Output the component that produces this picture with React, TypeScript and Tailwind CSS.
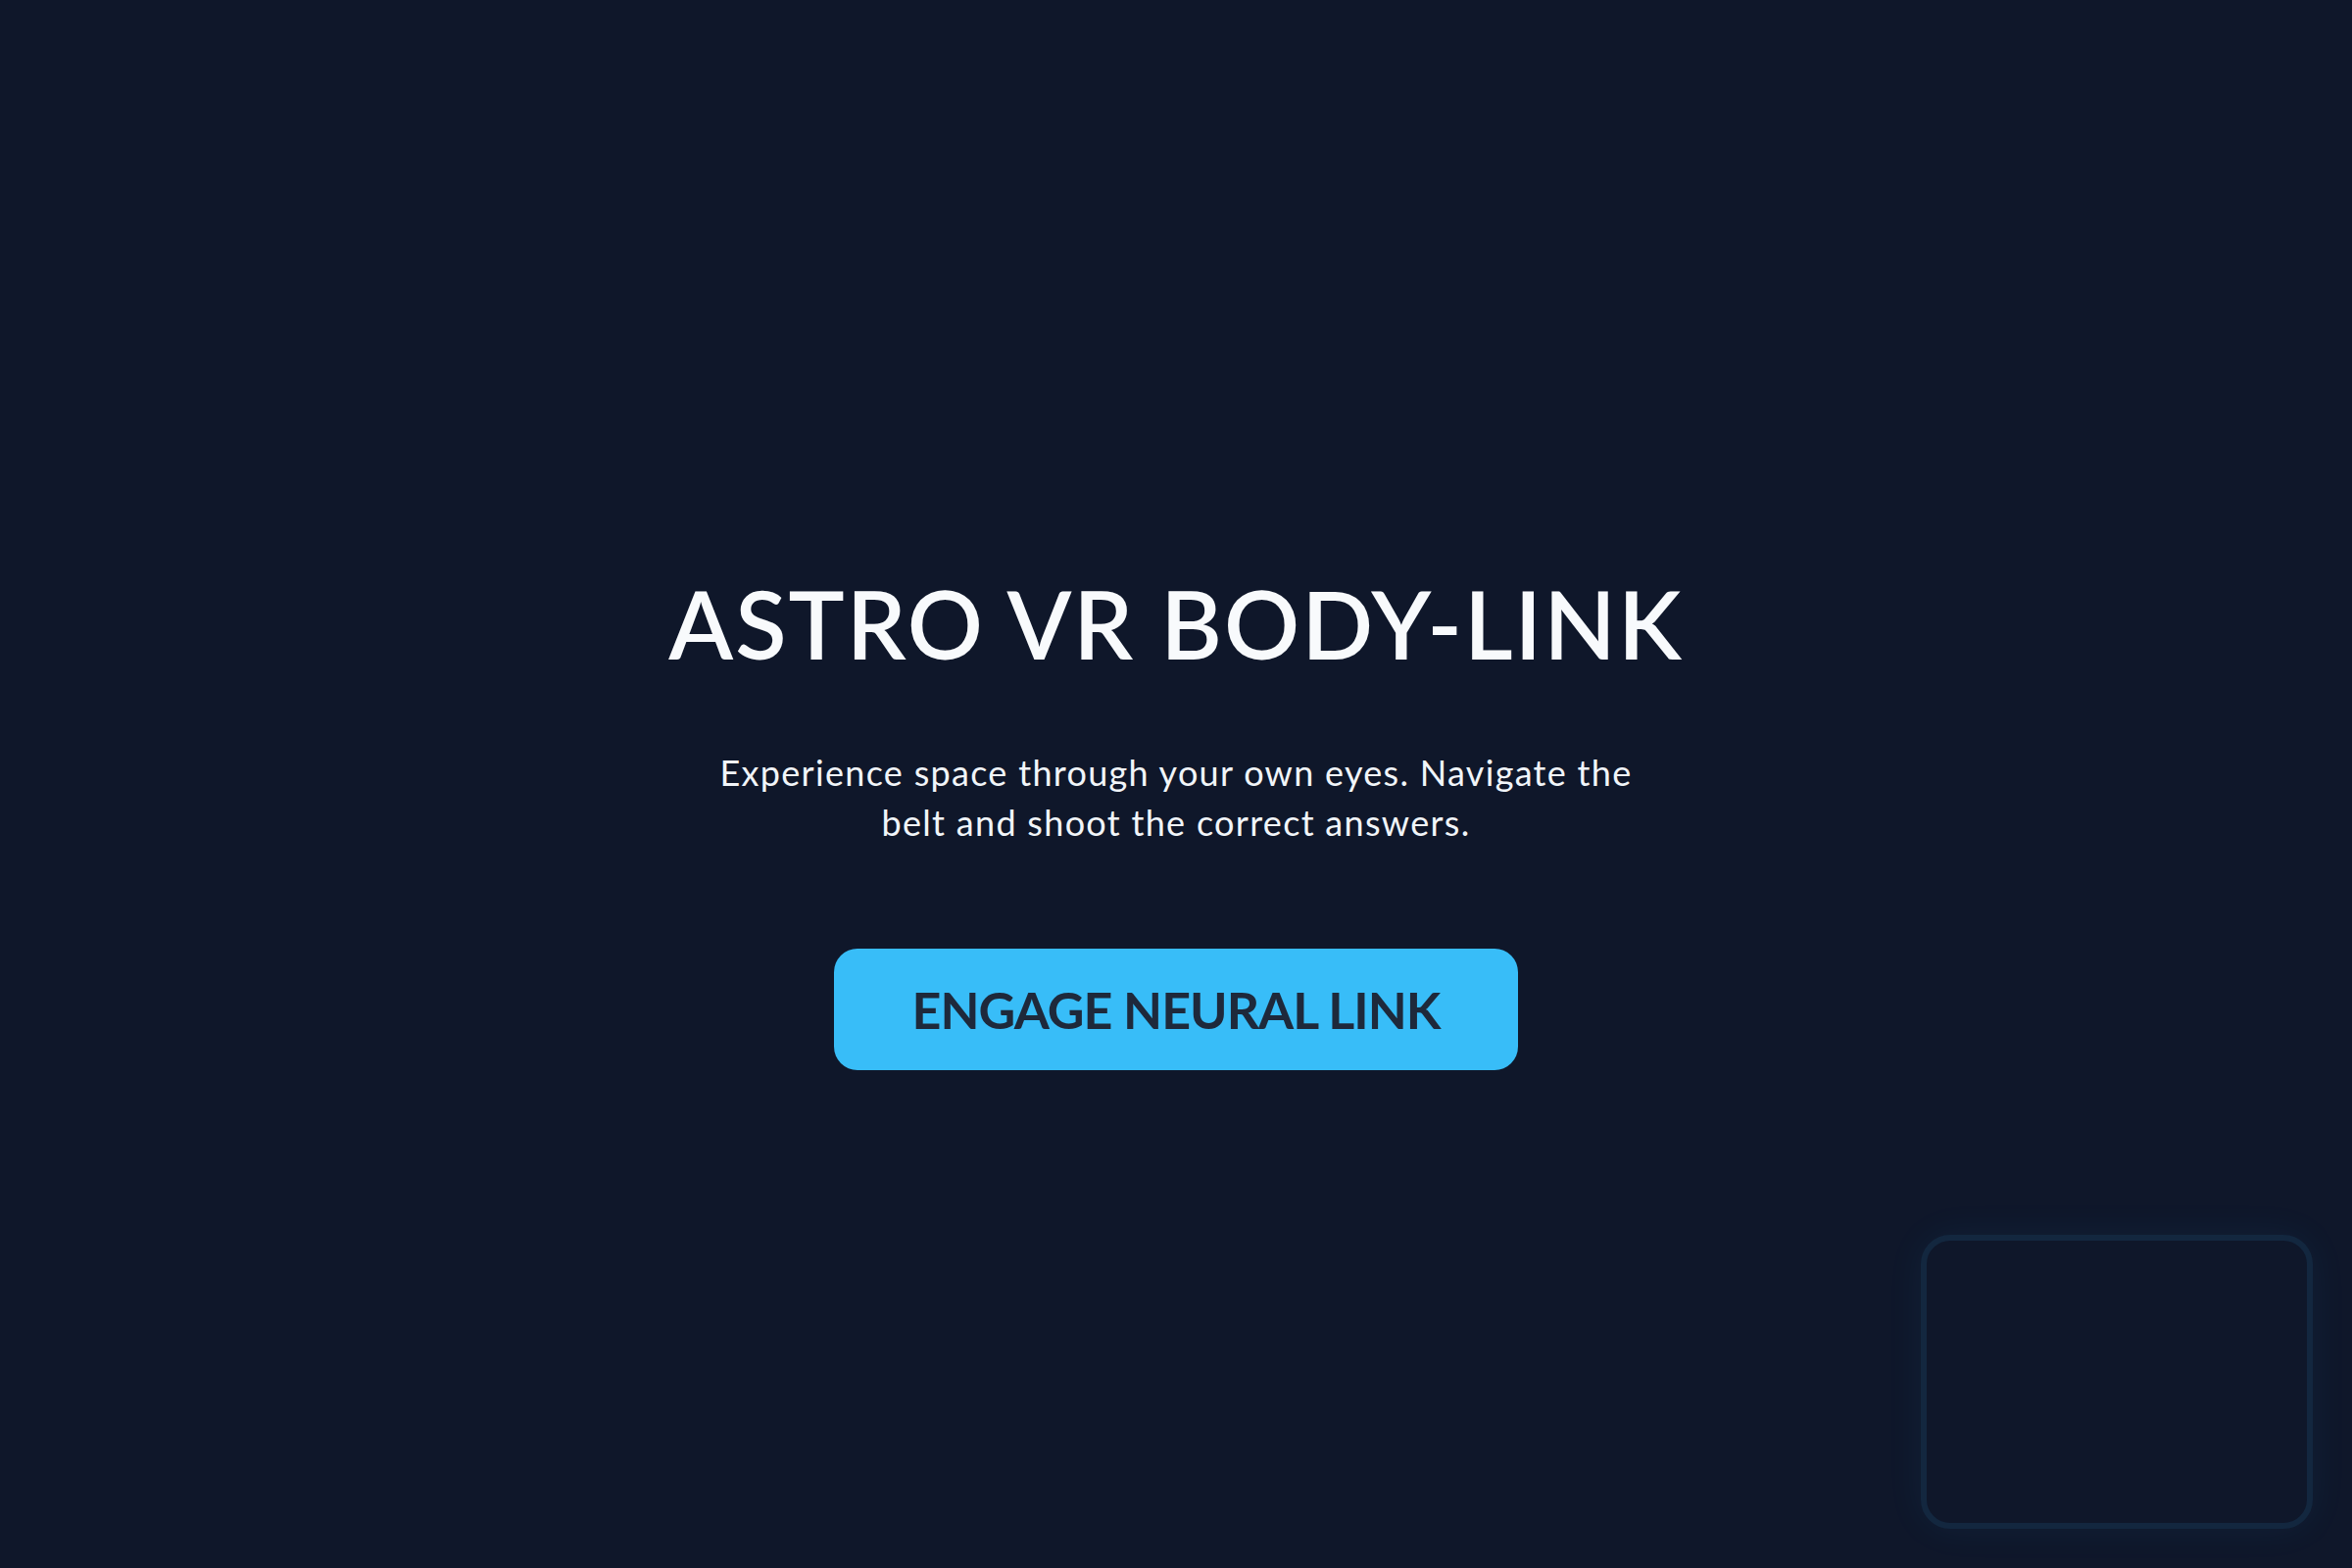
export default function App() {
  return (
    <div className="relative flex min-h-screen w-full items-center justify-center bg-[#0f172a] font-['Lato','Open_Sans',sans-serif] text-slate-50">
      <div className="flex flex-col items-center pt-[80px] text-center">
        <h1 className="text-[96px] font-semibold leading-none tracking-[2px]">
          ASTRO VR BODY-LINK
        </h1>
        <p className="mt-[79px] max-w-[960px] text-[36px] leading-[51px] tracking-[1.3px] text-slate-100">
          Experience space through your own eyes. Navigate the belt and shoot
          the correct answers.
        </p>
        <button
          type="button"
          className="mt-[103px] flex h-[124px] items-center justify-center whitespace-nowrap rounded-[24px] bg-[#38bdf8] px-[80px] text-[52px] font-bold tracking-[-1px] text-[#1e293b]"
        >
          ENGAGE NEURAL LINK
        </button>
      </div>

      {/* camera preview */}
      <div className="absolute bottom-10 right-10 h-[300px] w-[400px] rounded-[30px] border-[6px] border-[#13273f] bg-[#0f172a] shadow-[0_0_40px_rgba(56,189,248,0.06)]" />
    </div>
  );
}
